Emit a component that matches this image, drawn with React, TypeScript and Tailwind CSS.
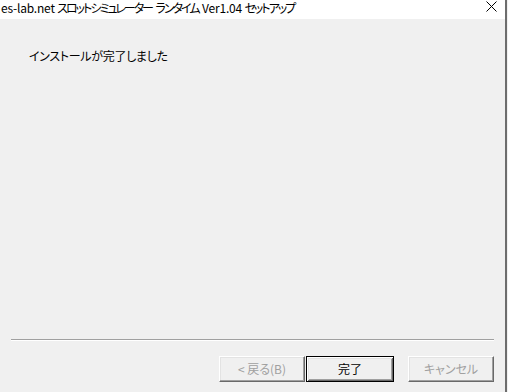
import React from "react";

const FONT = "font-['Meiryo_UI','Noto_Sans_CJK_JP',sans-serif]";

function CloseIcon() {
  return (
    <svg width="11" height="11" viewBox="0 0 11 11" className="block">
      <path d="M0.5 0.5 L10.5 10.5 M10.5 0.5 L0.5 10.5" stroke="#000" strokeWidth="1" fill="none" />
    </svg>
  );
}

function DlgButton({ label, disabled, primary, width }: { label: string; disabled?: boolean; primary?: boolean; width: string }) {
  const base = `h-[26px] ${width} flex items-center justify-center text-[12px] leading-none bg-[#f0f0f0]`;
  if (primary) {
    return (
      <button className={`${base} border border-black shadow-[inset_1px_1px_#ffffff,inset_-1px_-1px_#696969,inset_2px_2px_#e3e3e3,inset_-2px_-2px_#a0a0a0] text-black`}>
        {label}
      </button>
    );
  }
  return (
    <button
      disabled={disabled}
      className={`${base} border-t border-l border-t-white border-l-white border-b border-r border-b-[#696969] border-r-[#696969] shadow-[inset_-1px_-1px_#a0a0a0,inset_1px_1px_#e3e3e3] ${disabled ? "text-[#a0a0a0]" : "text-black"}`}
    >
      {label}
    </button>
  );
}

// katakana in the title is narrower than the fallback font's, so tighten it
function Kana({ children }: { children: React.ReactNode }) {
  return <span className="tracking-[-2px] mr-[1px]">{children}</span>;
}

export default function App() {
  return (
    <div className={`w-[508px] h-[392px] flex bg-white overflow-hidden ${FONT} [font-feature-settings:'palt']`}>
      <div className="w-[505px] h-full flex flex-col bg-[#f0f0f0]">
        {/* Title bar */}
        <div className="h-[19px] bg-white flex items-start justify-between">
          <span className="pl-[1px] pt-[1px] text-[12px] leading-[14px] text-black whitespace-nowrap tracking-[-0.2px]">
            es-lab.net <Kana>スロットシミュレーター</Kana> <Kana>ランタイム</Kana> Ver1.04 <Kana>セットアップ</Kana>
          </span>
          <div className="pt-[1px] pr-[8px]">
            <CloseIcon />
          </div>
        </div>

        {/* Body */}
        <div className="flex-1 flex flex-col">
          <p className="pl-[29px] pt-[29px] text-[12px] leading-[16px] text-black tracking-[-0.3px]">
            インストールが完了しました
          </p>
          <div className="flex-1" />
          <div className="mx-[11px] border-t border-t-[#a0a0a0] border-b border-b-white" />
          <div className="flex justify-end pr-[11px] mt-[15px] mb-[10px]">
            <DlgButton label="< 戻る(B)" disabled width="w-[86px]" />
            <div className="w-[1px]" />
            <DlgButton label="完了" primary width="w-[88px]" />
            <div className="w-[14px]" />
            <DlgButton label="キャンセル" disabled width="w-[86px]" />
          </div>
        </div>
      </div>
      <div className="w-[2px] h-full bg-[#6d6d6d]" />
      <div className="w-[1px] h-full bg-[#f0f0f0]" />
    </div>
  );
}
